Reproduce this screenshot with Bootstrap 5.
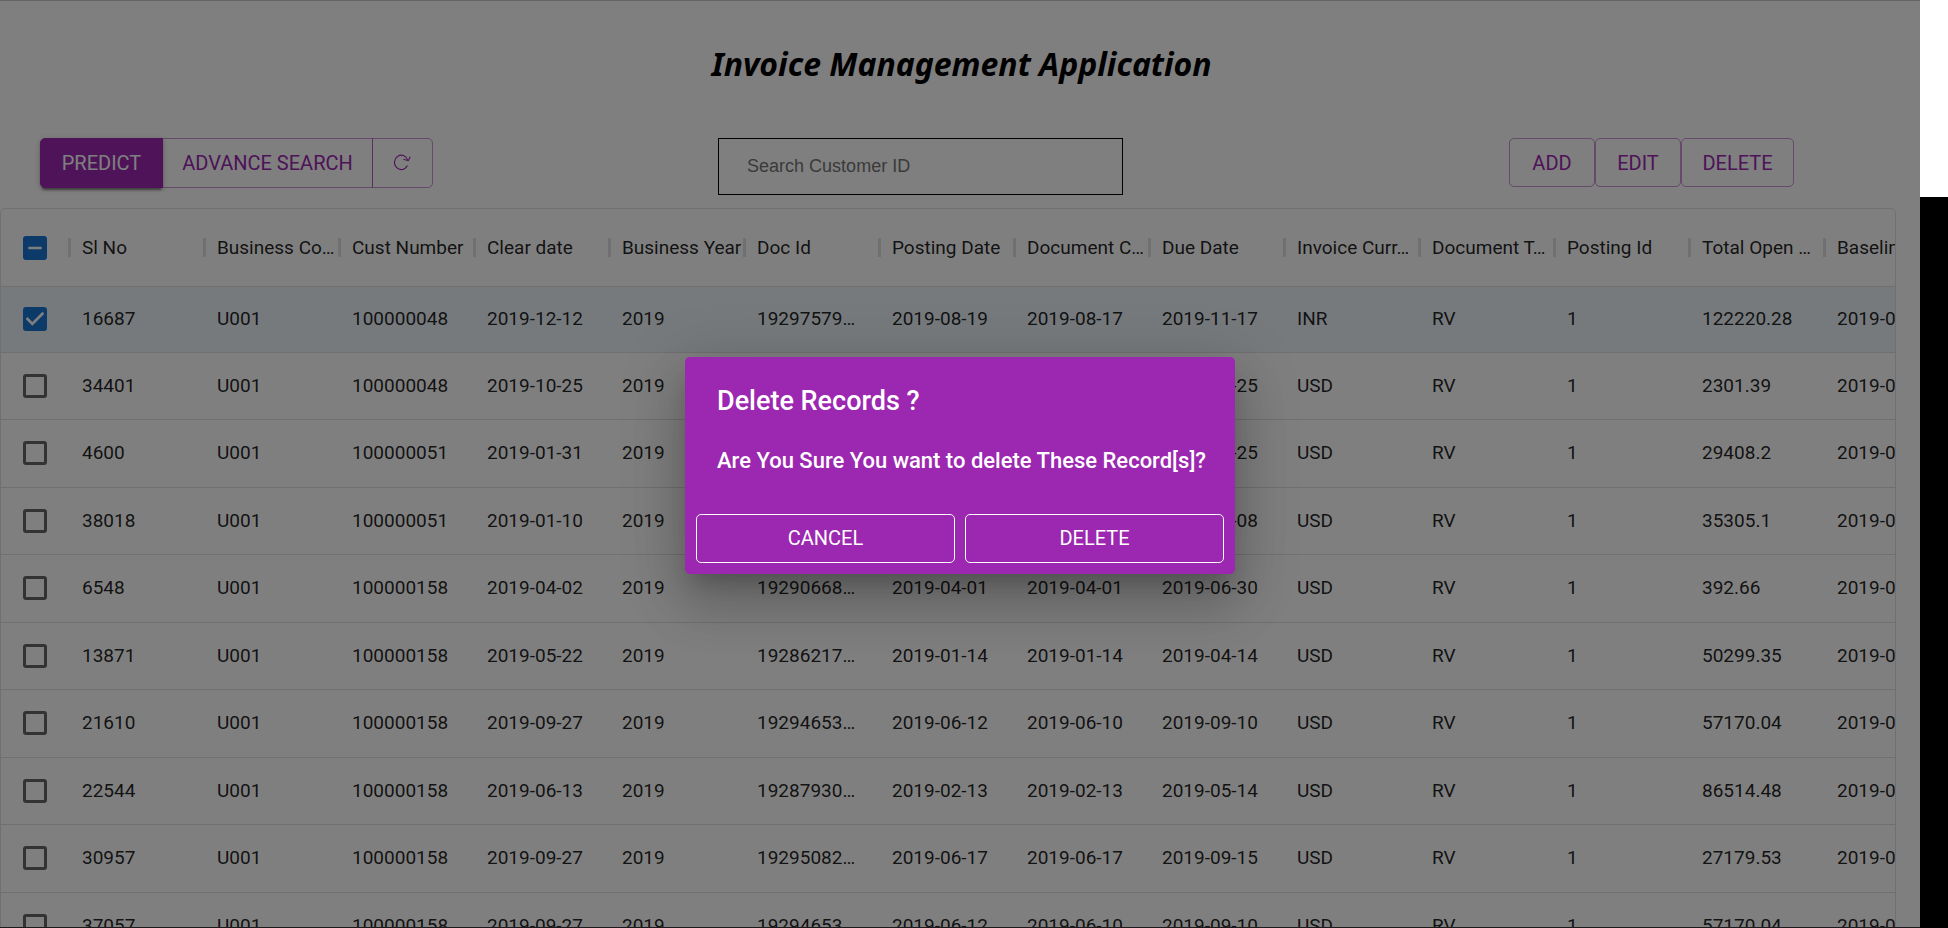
<!DOCTYPE html>
<html lang="en">
<head>
<meta charset="utf-8">
<meta name="viewport" content="width=device-width, initial-scale=1">
<title>Invoice Management Application</title>
<link href="https://cdn.jsdelivr.net/npm/bootstrap@5.3.0/dist/css/bootstrap.min.css" rel="stylesheet">
<style>
  :root { --purple: #9c27b0; --purple-line: rgba(156, 39, 176, .5); --line: #e0e0e0; }
  body { font-family: Roboto, sans-serif; font-size: 19px; line-height: 28px; color: rgba(0, 0, 0, .87); }

  .app-pane { min-width: 0; border-top: 1px solid #646469; background: #fff; }
  .side-strip { width: 28px; background: #000; }
  .side-strip > div { height: 197px; background: #fff; }

  .app-title { height: 137px; padding: 0 0 10px 3px; font-family: "Noto Sans", sans-serif; font-style: italic; font-weight: 700; font-size: 32px; color: #000; }
  .toolbar { display: grid; grid-template-columns: 37.4% 405px 1fr; align-items: start; margin-bottom: 13px; }
  .tool-left { margin-left: 40px; }
  .tool-right { padding-right: 126px; }

  .btn-tool { --bs-btn-font-size: 20px; --bs-btn-line-height: 32px; --bs-btn-border-radius: 5px;
    --bs-btn-color: var(--purple); --bs-btn-border-color: var(--purple-line); height: 49px; padding-top: 7px; padding-bottom: 7px; }
  .tool-left .btn-tool { height: 50px; }
  .btn-predict { --bs-btn-color: #fff; --bs-btn-bg: var(--purple); --bs-btn-border-color: var(--purple); width: 123px;
    box-shadow: 0 4px 2px -2px rgba(0,0,0,.3), 0 2px 3px rgba(0,0,0,.2), 0 1px 7px rgba(0,0,0,.16); }
  .btn-advance { width: 211px; }
  .btn-refresh { width: 61px; }
  .btn-small { width: 86px; }
  .btn-wide { width: 113px; }

  .search-box { height: 57px; padding: 0 28px; border: 1px solid #000; border-radius: 0; font-family: "Liberation Sans", sans-serif; font-size: 18px; background: transparent; }
  .search-box::placeholder { color: #757575; }

  .grid-frame { margin-right: 24px; border: 1px solid var(--line); border-radius: 5px; }
  .grid-table { table-layout: fixed; width: 1958px; margin: 0; white-space: nowrap; }
  .grid-table col { width: 135px; }
  .grid-table col.pick { width: 68px; }
  .grid-table th, .grid-table td { padding: 0 0 0 13px; vertical-align: middle; font-weight: 400; border-bottom: 1px solid var(--line); }
  .grid-table th { position: relative; height: 77px; padding-top: 2px; }
  .grid-table tr > :first-child { padding-left: 22px; line-height: 0; }
  .grid-table th:not(:last-child)::after { content: ""; position: absolute; right: -2px; top: 29px; width: 3px; height: 19px; background: var(--line); }
  .grid-table tbody tr { height: 68px; }
  .grid-table tbody tr:nth-child(even) { height: 67px; }
  .grid-table tbody tr:first-child { height: 66px; }
  .grid-table tr.picked { background: rgba(25, 118, 210, .08); }

  .form-check-input.pick-box { width: 24px; height: 24px; margin: 0; border: 3px solid rgba(0, 0, 0, .6); border-radius: 3px; background-size: 24px 24px; background-origin: border-box; }
  .form-check-input.pick-box:checked, .form-check-input.pick-box:indeterminate { border-color: #1976d2; background-color: #1976d2; }
  .form-check-input.pick-box:checked { background-image: url("data:image/svg+xml,%3Csvg xmlns='http://www.w3.org/2000/svg' viewBox='3 3 18 18'%3E%3Cpath fill='%23fff' d='M10 17l-5-5 1.41-1.41L10 14.17l7.59-7.59L19 8z'/%3E%3C/svg%3E"); }
  .form-check-input.pick-box:indeterminate { background-image: url("data:image/svg+xml,%3Csvg xmlns='http://www.w3.org/2000/svg' viewBox='3 3 18 18'%3E%3Cpath fill='%23fff' d='M7 11h10v2H7z'/%3E%3C/svg%3E"); }

  .scrim { padding-top: 2px; background: rgba(0, 0, 0, .5); border-bottom: 1px solid #1c1a1c; }
  .confirm { width: 550px; border-radius: 5px; background: var(--purple); color: #fff; font-weight: 500;
    box-shadow: 0 15px 20px -9px rgba(0,0,0,.2), 0 32px 51px 4px rgba(0,0,0,.14), 0 12px 62px 11px rgba(0,0,0,.12); }
  .confirm h2 { margin: 0; padding: 23px 32px 22px; font-size: 27px; line-height: 43px; font-weight: 500; }
  .confirm p { margin: 0; padding: 0 28px 37px 32px; font-size: 22px; line-height: 32px; white-space: nowrap; }
  .confirm-actions { gap: 10px; padding: 0 11px 11px; }
  .confirm .btn-tool { --bs-btn-color: #fff; --bs-btn-border-color: #fff; }
</style>
</head>
<body>
<div class="d-flex vh-100 overflow-hidden">
  <div class="app-pane position-relative flex-grow-1 overflow-hidden">
    <h1 class="app-title d-flex align-items-center justify-content-center mb-0">Invoice Management Application</h1>

    <div class="toolbar">
      <div class="tool-left">
        <div class="btn-group" role="group" aria-label="Record tools">
          <button type="button" class="btn btn-tool btn-predict px-0">PREDICT</button>
          <button type="button" class="btn btn-tool btn-advance px-0">ADVANCE SEARCH</button>
          <button type="button" class="btn btn-tool btn-refresh px-0 d-flex align-items-center justify-content-center" aria-label="Refresh">
            <svg width="18" height="18" viewBox="0 0 18 18" fill="none" stroke="currentColor" stroke-width="1.1"><path d="M13.4 11.6A6.8 7.2 0 1 1 13.9 6.6M9.4 5.2l4.9 1.5 1.9-3.9"/></svg>
          </button>
        </div>
      </div>
      <input type="search" class="form-control search-box" placeholder="Search Customer ID" aria-label="Search Customer ID">
      <div class="tool-right d-flex justify-content-end">
        <button type="button" class="btn btn-tool btn-small px-0">ADD</button>
        <button type="button" class="btn btn-tool btn-small px-0">EDIT</button>
        <button type="button" class="btn btn-tool btn-wide px-0">DELETE</button>
      </div>
    </div>

    <div class="grid-frame overflow-hidden">
      <table class="grid-table">
        <colgroup><col class="pick"><col span="14"></colgroup>
        <thead>
          <tr>
            <th scope="col"><input type="checkbox" class="form-check-input pick-box" id="pickAll" aria-label="Select all rows"></th>
            <th scope="col">Sl No</th><th scope="col">Business Co…</th><th scope="col">Cust Number</th><th scope="col">Clear date</th>
            <th scope="col">Business Year</th><th scope="col">Doc Id</th><th scope="col">Posting Date</th><th scope="col">Document C…</th>
            <th scope="col">Due Date</th><th scope="col">Invoice Curr…</th><th scope="col">Document T…</th><th scope="col">Posting Id</th>
            <th scope="col">Total Open …</th><th scope="col">Baseline …</th>
          </tr>
        </thead>
        <tbody id="rows"></tbody>
      </table>
    </div>

    <div class="scrim position-absolute top-0 bottom-0 start-0 end-0 d-flex align-items-center justify-content-center">
      <div class="confirm" role="dialog" aria-modal="true" aria-labelledby="confirmTitle">
        <h2 id="confirmTitle">Delete Records ?</h2>
        <p>Are You Sure You want to delete These Record[s]?</p>
        <div class="confirm-actions d-flex">
          <button type="button" class="btn btn-tool flex-fill w-50">CANCEL</button>
          <button type="button" class="btn btn-tool flex-fill w-50">DELETE</button>
        </div>
      </div>
    </div>
  </div>
  <div class="side-strip flex-shrink-0"><div></div></div>
</div>

<script src="https://cdn.jsdelivr.net/npm/bootstrap@5.3.0/dist/js/bootstrap.bundle.min.js"></script>
<script>
  // Sl no, customer, clear date, doc id, posting, document, due, currency, total open, baseline
  const records = [
    ['16687', '100000048', '2019-12-12', '19297579…', '2019-08-19', '2019-08-17', '2019-11-17', 'INR', '122220.28', '2019-08-19'],
    ['34401', '100000048', '2019-10-25', '19296210…', '2019-07-25', '2019-07-25', '2019-10-25', 'USD', '2301.39', '2019-07-25'],
    ['4600', '100000051', '2019-01-31', '19285102…', '2019-01-10', '2019-01-10', '2019-03-25', 'USD', '29408.2', '2019-01-10'],
    ['38018', '100000051', '2019-01-10', '19284730…', '2019-01-03', '2019-01-03', '2019-03-08', 'USD', '35305.1', '2019-01-03'],
    ['6548', '100000158', '2019-04-02', '19290668…', '2019-04-01', '2019-04-01', '2019-06-30', 'USD', '392.66', '2019-04-01'],
    ['13871', '100000158', '2019-05-22', '19286217…', '2019-01-14', '2019-01-14', '2019-04-14', 'USD', '50299.35', '2019-01-14'],
    ['21610', '100000158', '2019-09-27', '19294653…', '2019-06-12', '2019-06-10', '2019-09-10', 'USD', '57170.04', '2019-06-12'],
    ['22544', '100000158', '2019-06-13', '19287930…', '2019-02-13', '2019-02-13', '2019-05-14', 'USD', '86514.48', '2019-02-13'],
    ['30957', '100000158', '2019-09-27', '19295082…', '2019-06-17', '2019-06-17', '2019-09-15', 'USD', '27179.53', '2019-06-17'],
    ['37057', '100000158', '2019-09-27', '19294653…', '2019-06-12', '2019-06-10', '2019-09-10', 'USD', '57170.04', '2019-06-12']
  ];
  document.getElementById('rows').innerHTML = records.map((r, i) => {
    const cells = [r[0], 'U001', r[1], r[2], '2019', r[3], r[4], r[5], r[6], r[7], 'RV', '1', r[8], r[9]];
    return `<tr class="${i ? '' : 'picked'}"><td><input type="checkbox" class="form-check-input pick-box" aria-label="Select row ${r[0]}"${i ? '' : ' checked'}></td>`
      + cells.map(c => `<td>${c}</td>`).join('') + '</tr>';
  }).join('');
  document.getElementById('pickAll').indeterminate = true;
</script>
</body>
</html>
